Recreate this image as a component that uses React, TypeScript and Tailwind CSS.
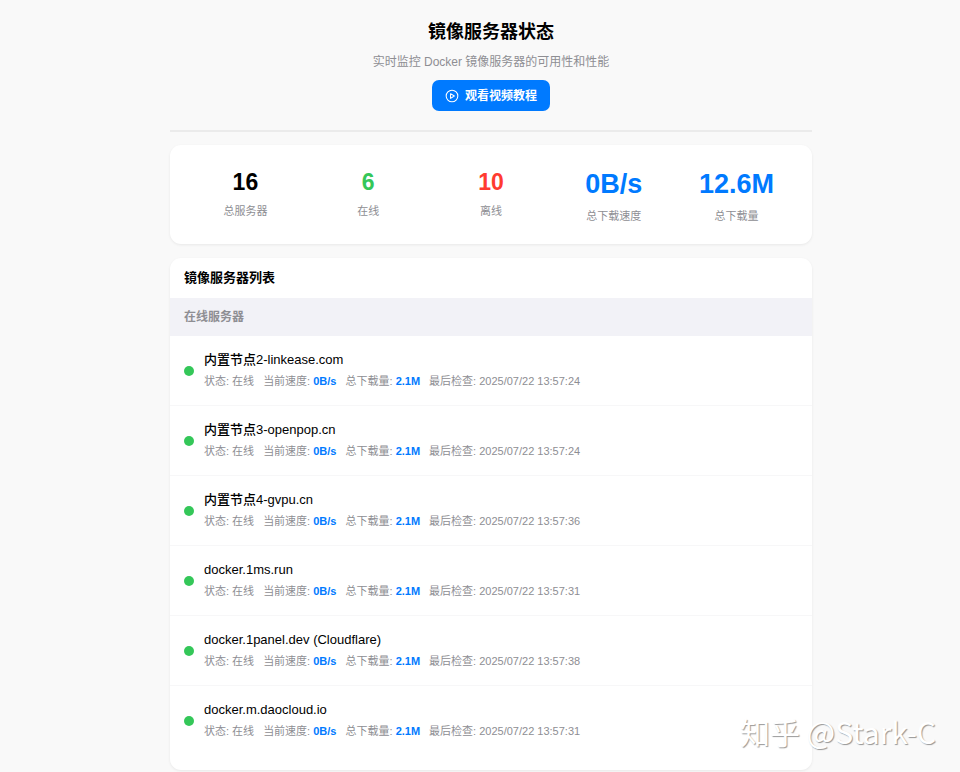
type Server = {
  name: string;
  speed: string;
  total: string;
  lastCheck: string;
};

type Stat = {
  value: string;
  label: string;
  color: string;
};

const stats: Stat[] = [
  { value: "16", label: "总服务器", color: "text-[23px] leading-7 text-black" },
  { value: "6", label: "在线", color: "text-[23px] leading-7 text-[#34c759]" },
  { value: "10", label: "离线", color: "text-[23px] leading-7 text-[#ff3b30]" },
  { value: "0B/s", label: "总下载速度", color: "text-[27px] leading-[33px] text-[#007aff]" },
  { value: "12.6M", label: "总下载量", color: "text-[27px] leading-[33px] text-[#007aff]" },
];

const servers: Server[] = [
  { name: "内置节点2-linkease.com", speed: "0B/s", total: "2.1M", lastCheck: "2025/07/22 13:57:24" },
  { name: "内置节点3-openpop.cn", speed: "0B/s", total: "2.1M", lastCheck: "2025/07/22 13:57:24" },
  { name: "内置节点4-gvpu.cn", speed: "0B/s", total: "2.1M", lastCheck: "2025/07/22 13:57:36" },
  { name: "docker.1ms.run", speed: "0B/s", total: "2.1M", lastCheck: "2025/07/22 13:57:31" },
  { name: "docker.1panel.dev (Cloudflare)", speed: "0B/s", total: "2.1M", lastCheck: "2025/07/22 13:57:38" },
  { name: "docker.m.daocloud.io", speed: "0B/s", total: "2.1M", lastCheck: "2025/07/22 13:57:31" },
];

function PlayIcon() {
  return (
    <svg width="14" height="14" viewBox="0 0 24 24" fill="none" stroke="currentColor" strokeWidth="1.8" strokeLinejoin="round" aria-hidden="true">
      <circle cx="12" cy="12" r="10" />
      <path d="M9.5 8l6.5 4-6.5 4z" />
    </svg>
  );
}

function ServerRow({ server }: { server: Server }) {
  return (
    <li className="flex h-[70px] items-center gap-[10px] border-b border-[#f7f7f8] px-[14px] last:border-transparent">
      <span className="size-[10px] shrink-0 rounded-full bg-[#34c759]" />
      <div className="min-w-0 pb-0.5">
        <h3 className="text-[13px] leading-5 font-medium text-black">{server.name}</h3>
        <p className="mt-[3px] flex flex-wrap gap-x-[9px] text-[11px] leading-4 text-[#8e8e93]">
          <span>状态: 在线</span>
          <span>
            当前速度: <strong className="font-semibold text-[#007aff]">{server.speed}</strong>
          </span>
          <span>
            总下载量: <strong className="font-semibold text-[#007aff]">{server.total}</strong>
          </span>
          <span>最后检查: {server.lastCheck}</span>
        </p>
      </div>
    </li>
  );
}

export default function App() {
  return (
    <div className="relative min-h-screen overflow-hidden bg-[#f9f9f9] pl-[22px] font-['Liberation_Sans','Noto_Sans_CJK_SC',sans-serif]">
      <main className="mx-auto max-w-[642px]">
        {/* Page header */}
        <header className="flex flex-col items-center border-b-2 border-[#ebebeb] pt-[19px] pb-[19px]">
          <h1 className="text-lg leading-[26px] font-bold text-black">镜像服务器状态</h1>
          <p className="mt-2 text-[12px] leading-[18px] text-[#8e8e93]">实时监控 Docker 镜像服务器的可用性和性能</p>
          <button
            type="button"
            className="mt-[9px] flex h-[31px] items-center gap-[6px] rounded-[7px] bg-[#007aff] px-[13px] text-[12px] text-white"
          >
            <PlayIcon />
            <span className="font-semibold">观看视频教程</span>
          </button>
        </header>

        {/* Totals */}
        <section className="mt-[13px] grid h-[99px] grid-cols-5 rounded-[11px] bg-white px-[14px] pt-[23px] text-center shadow-[0_1px_3px_rgba(0,0,0,0.07)]">
          {stats.map((stat) => (
            <div key={stat.label}>
              <div className={`font-bold ${stat.color}`}>{stat.value}</div>
              <div className="mt-[7px] text-[11px] leading-4 text-[#8e8e93]">{stat.label}</div>
            </div>
          ))}
        </section>

        {/* Server list */}
        <section className="mt-[14px] overflow-hidden rounded-[11px] bg-white pb-[14px] shadow-[0_1px_3px_rgba(0,0,0,0.07)]">
          <h2 className="px-[14px] py-[10px] text-[13px] leading-5 font-bold text-black">镜像服务器列表</h2>
          <div className="bg-[#f2f2f7] px-[14px] py-[10px] text-[12px] leading-[18px] font-semibold text-[#8e8e93]">在线服务器</div>
          <ul>
            {servers.map((server) => (
              <ServerRow key={server.name} server={server} />
            ))}
          </ul>
        </section>
      </main>

      <div className="pointer-events-none absolute top-[711px] right-[24px] font-['Noto_Sans_CJK_SC',sans-serif] text-[30px] leading-10 font-normal whitespace-nowrap text-white [text-shadow:1px_1px_1px_rgba(0,0,0,0.4)]">
        知乎 @Stark-C
      </div>
    </div>
  );
}
